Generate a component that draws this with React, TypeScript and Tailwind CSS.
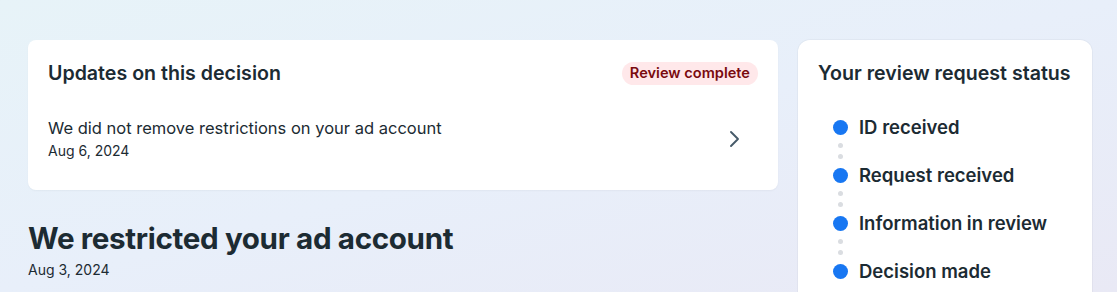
import React from "react";

const steps = ["ID received", "Request received", "Information in review", "Decision made"];

const ChevronRight = () => (
  <svg width="24" height="24" viewBox="0 0 24 24" fill="none" className="text-[#465a69]">
    <path d="M9 5l7 7-7 7" stroke="currentColor" strokeWidth="1.9" strokeLinecap="round" strokeLinejoin="round" />
  </svg>
);

export default function App() {
  return (
    <div
      className="h-[292px] w-full overflow-hidden bg-gradient-to-br from-[#e7f3f8] via-[#e8effa] to-[#e9e9f5] pl-[28px] pr-[25px] pt-[40px] text-[#1c2b33]"
      style={{ fontFamily: "Inter, 'Noto Sans', sans-serif" }}
    >
      <div className="flex gap-[20px]">
        {/* Left column */}
        <div className="w-[750px] shrink-0">
          <div className="h-[150px] rounded-lg bg-white px-5 pt-[20px] shadow-[0_1px_2px_rgba(0,0,0,0.04)]">
            <div className="flex items-center justify-between">
              <h2 className="text-[19.6px] font-semibold leading-[26px]">Updates on this decision</h2>
              <span className="rounded-full bg-[#ffe8ea] px-[8px] text-[14.6px] font-semibold leading-[23px] text-[#7a0a0f]">
                Review complete
              </span>
            </div>
            <div className="mt-[31px] flex items-center justify-between pr-[12px]">
              <div>
                <p className="text-[16.5px] leading-[22px]">We did not remove restrictions on your ad account</p>
                <p className="mt-[2px] text-[14px] leading-[20px]">Aug 6, 2024</p>
              </div>
              <ChevronRight />
            </div>
          </div>

          <div className="mt-[30px]">
            <h1 className="text-[29.6px] font-bold leading-[36px] tracking-[-0.35px]">We restricted your ad account</h1>
            <p className="mt-[5px] text-[14px] leading-[18px]">Aug 3, 2024</p>
          </div>
        </div>

        {/* Right column */}
        <div className="h-[280px] flex-1 rounded-xl bg-white px-5 pt-[20px] shadow-[0_0_0_1px_rgba(0,0,0,0.03)]">
          <h2 className="text-[19.6px] font-semibold leading-[26px]">Your review request status</h2>
          <ul className="mt-[30px] pl-[15px]">
            {steps.map((s, i) => (
              <li key={s}>
                <div className="flex items-center gap-[11px]">
                  <span className="h-[15px] w-[15px] rounded-full bg-[#1877f2]" />
                  <span className="text-[18.5px] font-semibold leading-[22px]">{s}</span>
                </div>
                {i < steps.length - 1 && (
                  <div className="flex w-[15px] flex-col items-center gap-[6px] py-[5px]">
                    <span className="h-[5px] w-[5px] rounded-full bg-[#dadde1]" />
                    <span className="h-[5px] w-[5px] rounded-full bg-[#dadde1]" />
                  </div>
                )}
              </li>
            ))}
          </ul>
        </div>
      </div>
    </div>
  );
}
